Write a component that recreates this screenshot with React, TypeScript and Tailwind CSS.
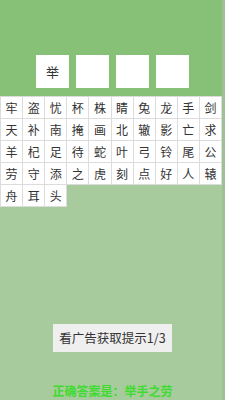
import React from "react";

const chars = [
  "牢","盗","忧","杯","株","睛","兔","龙","手","剑",
  "天","补","南","掩","画","北","辙","影","亡","求",
  "羊","杞","足","待","蛇","叶","弓","铃","尾","公",
  "劳","守","添","之","虎","刻","点","好","人","辕",
  "舟","耳","头",
];

export default function App() {
  const answer = ["举", "", "", ""];
  return (
    <div
      className="w-[225px] h-[400px] overflow-hidden flex flex-col bg-[#a7cb9c] border-r-[3px] border-r-black/[0.05]"
      style={{ fontFamily: '"Noto Sans CJK SC", "Noto Sans", sans-serif' }}
    >
      <div className="bg-[#87c177] pt-[55px] pb-[8px] flex justify-center gap-[7px] pl-[3px]">
        {answer.map((c, i) => (
          <div
            key={i}
            className="w-[33px] h-[33px] bg-white flex items-center justify-center text-[13px] text-[#333]"
          >
            {c}
          </div>
        ))}
      </div>
      <div className="w-[222px] grid grid-cols-10 border-t border-l border-[#dcdcdc]">
        {chars.map((c, i) => (
          <div
            key={i}
            className="h-[22px] bg-white border-r border-b border-[#dcdcdc] flex items-center justify-center text-[12px] leading-none text-[#333]"
          >
            {c}
          </div>
        ))}
      </div>
      <div className="mt-[117px] flex justify-center pl-[3px]">
        <div className="w-[119px] h-[28px] bg-[#efefef] flex items-center justify-center text-[12.5px] text-[#333]">
          看广告获取提示1/3
        </div>
      </div>
      <div className="mt-[31px] pl-[3px] text-center text-[12px] leading-[16px] font-bold text-[#3ddc2f]">
        正确答案是：举手之劳
      </div>
    </div>
  );
}
